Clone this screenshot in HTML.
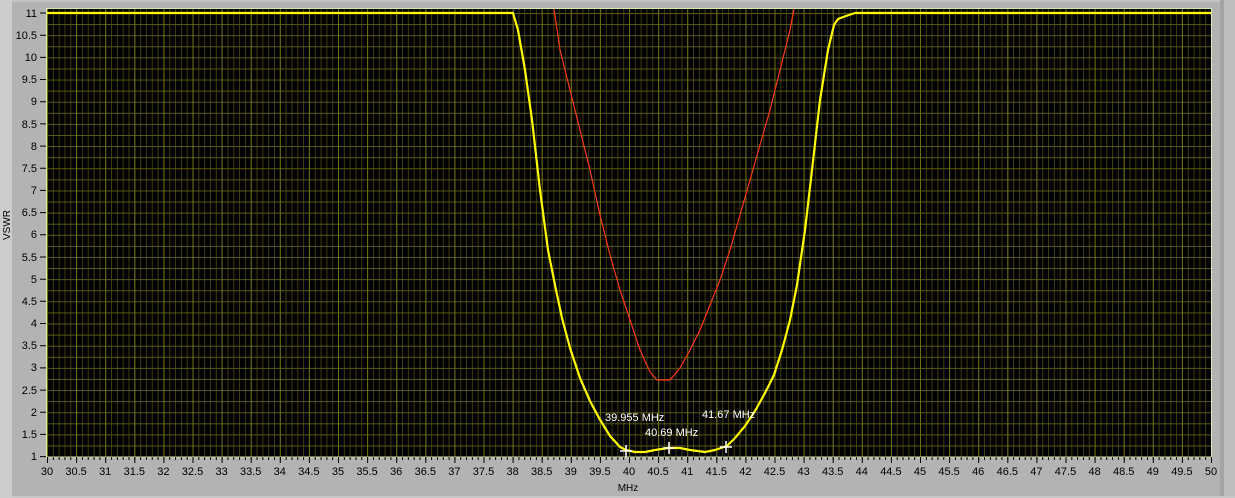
<!DOCTYPE html>
<html><head><meta charset="utf-8"><style>
html,body{margin:0;padding:0;width:1235px;height:498px;overflow:hidden;background:#b3b3b3}
svg{display:block}
text{font-family:"Liberation Sans",sans-serif;font-size:11px;fill:#000}
</style></head><body>
<svg width="1235" height="498" viewBox="0 0 1235 498">
<defs>
<pattern id="mx" x="47" y="0" width="5.82" height="10" patternUnits="userSpaceOnUse"><rect x="0" y="0" width="1" height="10" fill="#3d3d0c"/></pattern>
<pattern id="Mx" x="47" y="0" width="29.1" height="10" patternUnits="userSpaceOnUse"><rect x="0" y="0" width="1" height="10" fill="#6e6e10"/></pattern>
<pattern id="hy" x="0" y="13" width="10" height="11.09" patternUnits="userSpaceOnUse"><rect x="0" y="0" width="10" height="1" fill="#5a5a0e"/></pattern>
</defs>
<rect x="0" y="0" width="12" height="498" fill="#cdcdcd"/>
<rect x="12" y="0" width="1223" height="2" fill="#c4c4c4"/>
<rect x="1220" y="0" width="4" height="498" fill="#a4a4a4"/>
<rect x="1224" y="0" width="11" height="498" fill="#bdbdbd"/>
<rect x="12" y="496" width="1223" height="2" fill="#c8c8c8"/>
<rect x="47" y="9" width="1164" height="448" fill="#000"/>
<rect x="47" y="9" width="1164" height="448" fill="url(#mx)"/>
<rect x="47" y="9" width="1164" height="448" fill="url(#hy)"/>
<rect x="47" y="9" width="1164" height="448" fill="url(#Mx)"/>
<rect x="46.5" y="8.5" width="1165" height="448.5" fill="none" stroke="#d8e8b0" stroke-width="1"/>
<polyline fill="none" stroke="#ff3a10" stroke-width="1.2" points="554,9 560,50 570,90 580,130 590,170 600,215 610,255 620,290 630,320 640,350 650,372 657,380 670,380 680,368 690,350 700,330 710,305 720,280 730,250 740,215 750,180 760,145 770,110 780,70 790,30 794,9"/>
<polyline fill="none" stroke="#ffff00" stroke-width="2.2" stroke-linejoin="round" points="47,13 513,13 518,30 525,70 532,120 540,190 548,250 556,290 562,318 570,348 580,378 590,401 599,418 610,436 620,447 626,450 635,452 645,452 655,450 668,448 680,448 690,450 705,452 715,450 727,446 735,438 745,426 755,411 765,393 774,375 782,350 790,320 797,285 805,230 812,170 820,100 828,50 834,25 838,19 846,16 855,13 1211,13"/>
<g stroke="#fff" stroke-width="1.5">
<path d="M620,451h12M626,445v12M663,448h12M669,442v12M720,447h12M726,441v12"/>
</g>
<g style="fill:#fff">
<text x="605" y="421" style="fill:#fff">39.955 MHz</text>
<text x="645" y="436" style="fill:#fff">40.69 MHz</text>
<text x="702" y="418" style="fill:#fff">41.67 MHz</text>
</g>
<g stroke="#000" stroke-width="1">
<path d="M40,13h6M40,35.2h6M40,57.4h6M40,79.5h6M40,101.7h6M40,123.9h6M40,146.1h6M40,168.3h6M40,190.4h6M40,212.6h6M40,234.8h6M40,257h6M40,279.2h6M40,301.3h6M40,323.5h6M40,345.7h6M40,367.9h6M40,390.1h6M40,412.2h6M40,434.4h6M40,456.6h6"/>
</g>
<g text-anchor="end">
<text x="37" y="17">11</text><text x="37" y="39">10.5</text><text x="37" y="61">10</text><text x="37" y="83">9.5</text><text x="37" y="105">9</text><text x="37" y="128">8.5</text><text x="37" y="150">8</text><text x="37" y="172">7.5</text><text x="37" y="194">7</text><text x="37" y="216">6.5</text><text x="37" y="238">6</text><text x="37" y="261">5.5</text><text x="37" y="283">5</text><text x="37" y="305">4.5</text><text x="37" y="327">4</text><text x="37" y="349">3.5</text><text x="37" y="371">3</text><text x="37" y="394">2.5</text><text x="37" y="416">2</text><text x="37" y="438">1.5</text><text x="37" y="460">1</text>
</g>
<rect x="47" y="457" width="1165" height="6" fill="url(#tk)"/>
<defs>
<pattern id="tk" x="47" y="457" width="5.82" height="6" patternUnits="userSpaceOnUse"><rect x="0" y="0" width="1" height="3" fill="#000"/></pattern>
<pattern id="tkM" x="47" y="457" width="29.1" height="6" patternUnits="userSpaceOnUse"><rect x="0" y="0" width="1" height="6" fill="#000"/></pattern>
</defs>
<rect x="47" y="457" width="1165" height="6" fill="url(#tkM)"/>
<g text-anchor="middle">
<text x="47" y="475">30</text><text x="76.1" y="475">30.5</text><text x="105.2" y="475">31</text><text x="134.3" y="475">31.5</text><text x="163.4" y="475">32</text><text x="192.5" y="475">32.5</text><text x="221.6" y="475">33</text><text x="250.7" y="475">33.5</text><text x="279.8" y="475">34</text><text x="308.9" y="475">34.5</text><text x="338" y="475">35</text><text x="367.1" y="475">35.5</text><text x="396.2" y="475">36</text><text x="425.3" y="475">36.5</text><text x="454.4" y="475">37</text><text x="483.5" y="475">37.5</text><text x="512.6" y="475">38</text><text x="541.7" y="475">38.5</text><text x="570.8" y="475">39</text><text x="599.9" y="475">39.5</text><text x="629" y="475">40</text><text x="658.1" y="475">40.5</text><text x="687.2" y="475">41</text><text x="716.3" y="475">41.5</text><text x="745.4" y="475">42</text><text x="774.5" y="475">42.5</text><text x="803.6" y="475">43</text><text x="832.7" y="475">43.5</text><text x="861.8" y="475">44</text><text x="890.9" y="475">44.5</text><text x="920" y="475">45</text><text x="949.1" y="475">45.5</text><text x="978.2" y="475">46</text><text x="1007.3" y="475">46.5</text><text x="1036.4" y="475">47</text><text x="1065.5" y="475">47.5</text><text x="1094.6" y="475">48</text><text x="1123.7" y="475">48.5</text><text x="1152.8" y="475">49</text><text x="1181.9" y="475">49.5</text><text x="1211" y="475">50</text>
<text x="628" y="491" style="font-size:10px">MHz</text>
<text transform="translate(10,225) rotate(-90)" style="font-size:10px">VSWR</text>
</g>
</svg>
</body></html>
